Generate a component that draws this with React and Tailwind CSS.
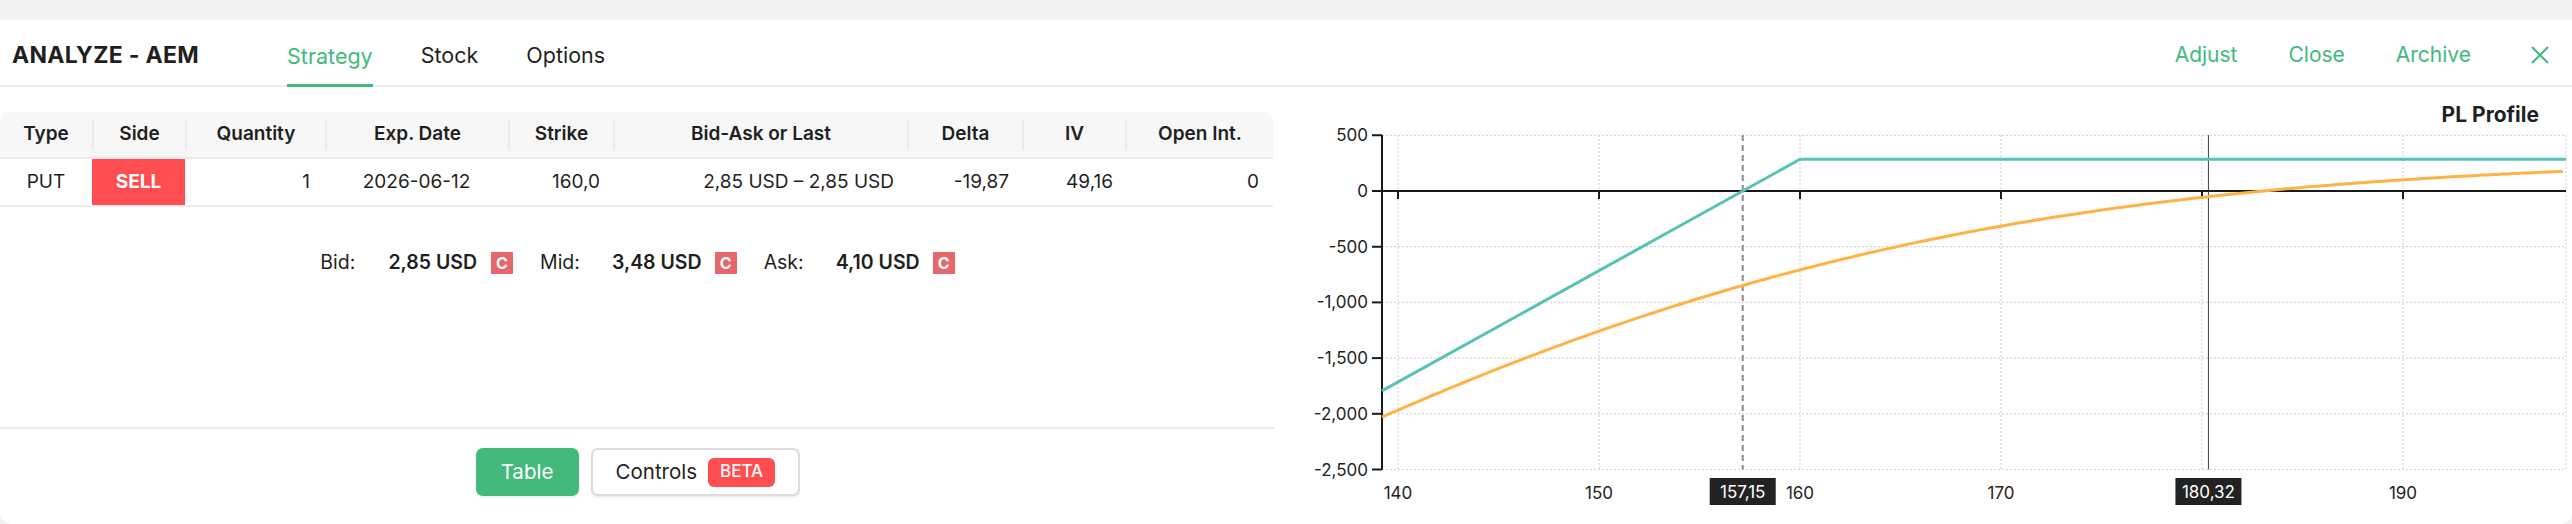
const columns = [
  { label: 'Type', width: 92 },
  { label: 'Side', width: 93 },
  { label: 'Quantity', width: 140 },
  { label: 'Exp. Date', width: 183 },
  { label: 'Strike', width: 105 },
  { label: 'Bid-Ask or Last', width: 294 },
  { label: 'Delta', width: 115 },
  { label: 'IV', width: 103 },
  { label: 'Open Int.', width: 148 },
]

// chart geometry (svg coords)
const X0 = 123
const PX_PER_UNIT = 20.1
const Y0 = 64
const PX_PER_PL = 55.7 / 500
const LEFT = 107
const RIGHT = 1291
const TOP = 8
const BOTTOM = 342.5

const xPx = (s) => X0 + (s - 140) * PX_PER_UNIT
const yPx = (v) => Y0 - v * PX_PER_PL

function normCdf(x) {
  const t = 1 / (1 + 0.2316419 * Math.abs(x))
  const d = 0.3989423 * Math.exp((-x * x) / 2)
  const p = d * t * (0.3193815 + t * (-0.3565638 + t * (1.781478 + t * (-1.821256 + t * 1.330274))))
  return x > 0 ? 1 - p : p
}

function putPrice(s) {
  const k = 160
  const sig = 0.4916
  const t = 0.1003
  const sq = sig * Math.sqrt(t)
  const d1 = (Math.log(s / k) + 0.5 * sig * sig * t) / sq
  const d2 = d1 - sq
  return k * normCdf(-d2) - s * normCdf(-d1)
}

function PLChart() {
  const sMin = 140 - (X0 - LEFT) / PX_PER_UNIT
  const sMax = 140 + (RIGHT - X0) / PX_PER_UNIT

  const expiry = [
    [sMin, 285 - 100 * (160 - sMin)],
    [160, 285],
    [sMax, 285],
  ]
    .map(([s, v]) => `${xPx(s).toFixed(1)},${yPx(v).toFixed(1)}`)
    .join(' ')

  const today = []
  for (let s = sMin; s <= sMax + 0.001; s += 0.25) {
    const v = (2.85 - putPrice(s)) * 100
    today.push(`${xPx(s).toFixed(1)},${yPx(v).toFixed(1)}`)
  }

  const yTicks = [500, 0, -500, -1000, -1500, -2000, -2500]
  const xTicks = [140, 150, 160, 170, 180, 190]
  const fmt = (v) => (v < 0 ? '-' : '') + Math.abs(v).toLocaleString('en-US')

  return (
    <svg width="1297" height="397" className="block font-['Inter',sans-serif]">
      {yTicks.map((v) => (
        <line key={'h' + v} x1={LEFT} x2={RIGHT} y1={yPx(v)} y2={yPx(v)} stroke="#d6d6d6" strokeWidth="1.2" strokeDasharray="2 2" />
      ))}
      {xTicks.map((s) => (
        <line key={'v' + s} x1={xPx(s)} x2={xPx(s)} y1={TOP} y2={BOTTOM} stroke="#d6d6d6" strokeWidth="1.2" strokeDasharray="2 2" />
      ))}
      <line x1={RIGHT} x2={RIGHT} y1={TOP} y2={BOTTOM} stroke="#d6d6d6" strokeWidth="1.2" strokeDasharray="2 2" />

      <line x1={xPx(157.15)} x2={xPx(157.15)} y1={TOP} y2={BOTTOM} stroke="#8a8a8a" strokeWidth="2" strokeDasharray="6 4" />
      <line x1={xPx(180.32)} x2={xPx(180.32)} y1={TOP} y2={BOTTOM} stroke="#444" strokeWidth="1" />

      <line x1={LEFT} x2={RIGHT} y1={Y0} y2={Y0} stroke="#1a1a1a" strokeWidth="2" />
      {xTicks.map((s) => (
        <line key={'t' + s} x1={xPx(s)} x2={xPx(s)} y1={Y0} y2={Y0 + 8} stroke="#1a1a1a" strokeWidth="2" />
      ))}
      <line x1={LEFT} x2={LEFT} y1={TOP} y2={BOTTOM} stroke="#1a1a1a" strokeWidth="2" />
      {yTicks.map((v) => (
        <g key={'y' + v}>
          <line x1={LEFT - 10} x2={LEFT} y1={yPx(v)} y2={yPx(v)} stroke="#1a1a1a" strokeWidth="2" />
          <text x={LEFT - 14} y={yPx(v)} textAnchor="end" dominantBaseline="central" fontSize="17" fill="#222">
            {fmt(v)}
          </text>
        </g>
      ))}

      <polyline points={today.join(' ')} fill="none" stroke="#ffb347" strokeWidth="3" strokeLinejoin="round" />
      <polyline points={expiry} fill="none" stroke="#57c2b5" strokeWidth="3" strokeLinejoin="round" />

      {xTicks.map((s) => (
        <text key={'l' + s} x={xPx(s)} y={366} textAnchor="middle" dominantBaseline="central" fontSize="17" fill="#222">
          {s}
        </text>
      ))}
      {[157.15, 180.32].map((s) => (
        <g key={'m' + s}>
          <rect x={xPx(s) - 33} y={351} width="66" height="27" fill="#222" />
          <text x={xPx(s)} y={365} textAnchor="middle" dominantBaseline="central" fontSize="17" fill="#fff">
            {s.toFixed(2).replace('.', ',')}
          </text>
        </g>
      ))}
    </svg>
  )
}

function Badge() {
  return (
    <span className="flex h-[22px] w-[22px] items-center justify-center bg-[#e5676b] text-[16px] font-bold text-white">C</span>
  )
}

export default function App() {
  return (
    <div className="h-[524px] w-[2572px] bg-[#f3f3f3] pt-[20px] font-['Inter',sans-serif] text-[#1f1f1f]">
      <div className="flex h-[504px] flex-col overflow-hidden rounded-b-[12px] bg-white">
        <header className="flex h-[67px] shrink-0 items-stretch border-b-2 border-[#eeeeee] pl-[12px] pr-[23px]">
          <div className="flex items-center pt-[5px] text-[23px] font-bold tracking-[0.3px]">ANALYZE - AEM</div>
          <nav className="ml-[88px] flex items-stretch gap-[48px] text-[21.5px]">
            <span className="-mb-[2px] flex items-center border-b-[3px] border-[#42b97c] pt-[8px] text-[#42b97c]">Strategy</span>
            <span className="flex items-center pt-[5px]">Stock</span>
            <span className="flex items-center pt-[5px]">Options</span>
          </nav>
          <div className="ml-auto flex items-center gap-[51px] pt-[5px] text-[21px] text-[#42b97c]">
            <span>Adjust</span>
            <span>Close</span>
            <span>Archive</span>
            <svg width="18" height="18" viewBox="0 0 18 18" className="ml-[9px]">
              <path d="M1 1 L17 17 M17 1 L1 17" stroke="#42b97c" strokeWidth="2" />
            </svg>
          </div>
        </header>

        <div className="flex min-h-0 flex-1">
          <section className="flex w-[1275px] shrink-0 flex-col">
            <div className="pt-[25px]">
              <div className="w-[1273px]">
                <div className="flex h-[47px] items-center rounded-t-[10px] border-b-2 border-[#ececec] bg-[#f7f7f7] text-[19px] font-semibold">
                  {columns.map((c, i) => (
                    <div
                      key={c.label}
                      style={{ width: c.width }}
                      className={'flex h-[31px] items-center justify-center ' + (i > 0 ? 'border-l-2 border-[#ebebeb]' : '')}>
                      {c.label}
                    </div>
                  ))}
                </div>
                <div className="flex h-[48px] items-stretch border-b-2 border-[#ececec] text-[19px]">
                  <div className="flex w-[92px] items-center justify-center">PUT</div>
                  <div className="flex w-[93px] items-center justify-center bg-[#ff4d52] font-bold text-white">SELL</div>
                  <div className="flex w-[140px] items-center justify-end pr-[15px]">1</div>
                  <div className="flex w-[183px] items-center justify-center">2026-06-12</div>
                  <div className="flex w-[105px] items-center justify-end pr-[13px]">160,0</div>
                  <div className="flex w-[294px] items-center justify-end pr-[13px]">2,85 USD – 2,85 USD</div>
                  <div className="flex w-[115px] items-center justify-end pr-[13px]">-19,87</div>
                  <div className="flex w-[103px] items-center justify-end pr-[12px]">49,16</div>
                  <div className="flex w-[148px] items-center justify-end pr-[14px]">0</div>
                </div>
              </div>
            </div>

            <div className="flex flex-1 items-start justify-center border-b-2 border-[#ededed] pt-[41px] text-[19.5px]">
              <div className="flex items-center">
                <span>Bid:</span>
                <span className="ml-[33px] font-semibold">2,85 USD</span>
                <span className="ml-[14px]"><Badge /></span>
                <span className="ml-[27px]">Mid:</span>
                <span className="ml-[32px] font-semibold">3,48 USD</span>
                <span className="ml-[13px]"><Badge /></span>
                <span className="ml-[27px]">Ask:</span>
                <span className="ml-[32px] font-semibold">4,10 USD</span>
                <span className="ml-[13px]"><Badge /></span>
              </div>
            </div>

            <div className="flex h-[95px] shrink-0 justify-center gap-[12px] pt-[19px]">
              <button type="button" className="h-[48px] w-[103px] rounded-[7px] bg-[#43b97b] text-[20.5px] text-white shadow-[0_2px_2px_rgba(0,0,0,0.06)]">
                Table
              </button>
              <button
                type="button"
                className="flex h-[48px] w-[209px] items-center gap-[11px] rounded-[7px] border-2 border-[#dcdcdc] bg-white pl-[23px] text-[20.5px] text-[#1f1f1f] shadow-[0_2px_2px_rgba(0,0,0,0.06)]">
                Controls
                <span className="flex h-[29px] w-[67px] items-center justify-center rounded-[6px] bg-[#ff4d52] text-[17px] font-medium text-white">BETA</span>
              </button>
            </div>
          </section>

          <section className="flex flex-1 flex-col">
            <div className="flex justify-end pr-[33px] pt-[16px] text-[21px] font-bold leading-[24px]">PL Profile</div>
            <PLChart />
          </section>
        </div>
      </div>
    </div>
  )
}
